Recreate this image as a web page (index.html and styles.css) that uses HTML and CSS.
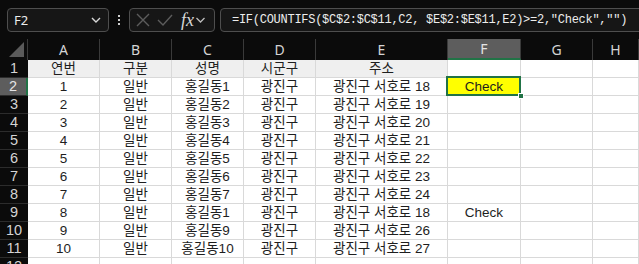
FILE: index.html
```html
<!DOCTYPE html>
<html lang="ko">
  <head>
    <meta charset="UTF-8" />
    <meta name="viewport" content="width=device-width, initial-scale=1.0" />
    <title>countifs check</title>
    <link rel="stylesheet" href="styles.css">
  </head>
  <body>
    <header class="formula-bar">
      <div class="name-box">
        <span>F2</span>
        <svg width="12" height="8" viewBox="0 0 12 8"><path d="M2 2 L6 6 L10 2" fill="none" stroke="#d8d8d8" stroke-width="1.4"/></svg>
      </div>
      <div class="dots"><i></i><i></i><i></i></div>
      <div class="fx-box">
        <svg width="16" height="16" viewBox="0 0 16 16"><path d="M2 2 L14 14 M14 2 L2 14" stroke="#5c5c5c" stroke-width="1.4"/></svg>
        <svg width="18" height="16" viewBox="0 0 18 16"><path d="M2 8 L7 13 L16 3" fill="none" stroke="#5c5c5c" stroke-width="1.4"/></svg>
        <span class="fx">fx</span>
        <svg width="11" height="8" viewBox="0 0 11 8"><path d="M1.5 2 L5.5 6 L9.5 2" fill="none" stroke="#bdbdbd" stroke-width="1.3"/></svg>
      </div>
      <div class="formula">=IF(COUNTIFS($C$2:$C$11,C2, $E$2:$E$11,E2)&gt;=2,"Check","")</div>
    </header>

    <main class="sheet">
      <div class="corner"></div>
      <div class="col-head">A</div>
      <div class="col-head">B</div>
      <div class="col-head">C</div>
      <div class="col-head">D</div>
      <div class="col-head">E</div>
      <div class="col-head active">F</div>
      <div class="col-head">G</div>
      <div class="col-head">H</div>

      <div class="row-head">1</div>
      <div class="cell title">연번</div>
      <div class="cell title">구분</div>
      <div class="cell title">성명</div>
      <div class="cell title">시군구</div>
      <div class="cell title">주소</div>
      <div class="cell"></div><div class="cell"></div><div class="cell"></div>

      <div class="row-head active">2</div>
      <div class="cell">1</div><div class="cell">일반</div><div class="cell">홍길동1</div><div class="cell">광진구</div><div class="cell">광진구 서호로 18</div>
      <div class="cell selected">Check</div><div class="cell"></div><div class="cell"></div>

      <div class="row-head">3</div>
      <div class="cell">2</div><div class="cell">일반</div><div class="cell">홍길동2</div><div class="cell">광진구</div><div class="cell">광진구 서호로 19</div>
      <div class="cell"></div><div class="cell"></div><div class="cell"></div>

      <div class="row-head">4</div>
      <div class="cell">3</div><div class="cell">일반</div><div class="cell">홍길동3</div><div class="cell">광진구</div><div class="cell">광진구 서호로 20</div>
      <div class="cell"></div><div class="cell"></div><div class="cell"></div>

      <div class="row-head">5</div>
      <div class="cell">4</div><div class="cell">일반</div><div class="cell">홍길동4</div><div class="cell">광진구</div><div class="cell">광진구 서호로 21</div>
      <div class="cell"></div><div class="cell"></div><div class="cell"></div>

      <div class="row-head">6</div>
      <div class="cell">5</div><div class="cell">일반</div><div class="cell">홍길동5</div><div class="cell">광진구</div><div class="cell">광진구 서호로 22</div>
      <div class="cell"></div><div class="cell"></div><div class="cell"></div>

      <div class="row-head">7</div>
      <div class="cell">6</div><div class="cell">일반</div><div class="cell">홍길동6</div><div class="cell">광진구</div><div class="cell">광진구 서호로 23</div>
      <div class="cell"></div><div class="cell"></div><div class="cell"></div>

      <div class="row-head">8</div>
      <div class="cell">7</div><div class="cell">일반</div><div class="cell">홍길동7</div><div class="cell">광진구</div><div class="cell">광진구 서호로 24</div>
      <div class="cell"></div><div class="cell"></div><div class="cell"></div>

      <div class="row-head">9</div>
      <div class="cell">8</div><div class="cell">일반</div><div class="cell">홍길동1</div><div class="cell">광진구</div><div class="cell">광진구 서호로 18</div>
      <div class="cell">Check</div><div class="cell"></div><div class="cell"></div>

      <div class="row-head">10</div>
      <div class="cell">9</div><div class="cell">일반</div><div class="cell">홍길동9</div><div class="cell">광진구</div><div class="cell">광진구 서호로 26</div>
      <div class="cell"></div><div class="cell"></div><div class="cell"></div>

      <div class="row-head">11</div>
      <div class="cell">10</div><div class="cell">일반</div><div class="cell">홍길동10</div><div class="cell">광진구</div><div class="cell">광진구 서호로 27</div>
      <div class="cell"></div><div class="cell"></div><div class="cell"></div>

      <div class="row-head">12</div>
      <div class="cell"></div><div class="cell"></div><div class="cell"></div><div class="cell"></div><div class="cell"></div>
      <div class="cell"></div><div class="cell"></div><div class="cell"></div>
    </main>
  </body>
</html>
```

FILE: styles.css
```css
:root {
  --bg-dark: #0b0b0b;
  --grid-line: #d9d9d9;
  --excel-green: #217346;
  --head-text: #d4d4d4;
}

html {
  box-sizing: border-box;
}

*,
*::before,
*::after {
  box-sizing: border-box;
}

body {
  margin: 0;
  width: 639px;
  height: 264px;
  overflow: hidden;
  background-color: var(--bg-dark);
  font-family: "Noto Sans", "Noto Sans CJK KR", sans-serif;
}

/* formula bar */
.formula-bar {
  display: flex;
  align-items: center;
  height: 39px;
  padding: 0 0 0 7px;
  white-space: nowrap;
}

.name-box,
.fx-box,
.formula {
  height: 24px;
  margin-top: 1px;
  border: 1px solid #4e4e4e;
  border-radius: 4px;
  background-color: #161616;
}

.name-box {
  display: flex;
  align-items: center;
  justify-content: space-between;
  width: 102px;
  padding: 0 6px 0 6px;
  color: #ececec;
  font-size: 13px;
  line-height: 16px;
}

.dots {
  display: flex;
  flex-direction: column;
  gap: 2px;
  width: 20px;
  align-items: center;
}

.dots i {
  display: block;
  width: 2px;
  height: 2px;
  background-color: #cfcfcf;
}

.fx-box {
  display: flex;
  align-items: center;
  width: 86px;
  padding: 0 0 0 5px;
  gap: 5px;
}

.fx-box .fx {
  font-family: "Liberation Serif", serif;
  font-style: italic;
  font-size: 18px;
  color: #d8d8d8;
  margin-left: 2px;
  margin-right: -4px;
  line-height: 1;
}

.formula {
  flex: 1;
  margin-left: 5px;
  margin-right: -12px;
  padding: 0 0 0 11px;
  line-height: 22px;
  color: #ededed;
  font-family: "Liberation Mono", monospace;
  font-size: 12px;
  letter-spacing: -0.27px;
}

/* sheet grid */
.sheet {
  display: grid;
  grid-template-columns: 28px 72px 72px 72px 72px 132px 73px 72px 1fr;
  grid-template-rows: 21px repeat(12, 18px);
  background-color: #fff;
}

.corner,
.col-head,
.row-head {
  background-color: var(--bg-dark);
  color: var(--head-text);
}

.corner {
  position: relative;
  border-right: 1px solid #3a3a3a;
}

.corner::after {
  content: "";
  position: absolute;
  right: 3px;
  bottom: 3px;
  width: 15px;
  height: 15px;
  background-color: #5a5a5a;
  clip-path: polygon(100% 0, 100% 100%, 0 100%);
}

.col-head {
  display: flex;
  align-items: center;
  justify-content: center;
  border-right: 1px solid #3a3a3a;
  font-size: 14px;
  line-height: 16px;
  padding-top: 1px;
}

.col-head.active {
  background-color: #5d5d5d;
  border-bottom: 2px solid var(--excel-green);
  color: #e4e4e4;
}

.row-head {
  display: flex;
  align-items: center;
  justify-content: center;
  border-bottom: 1px solid #2c2c2c;
  font-family: "Liberation Sans", sans-serif;
  font-size: 14.5px;
  line-height: 15px;
}

.row-head.active {
  background-color: #5d5d5d;
  border-right: 2px solid var(--excel-green);
  color: #e4e4e4;
}

.cell {
  display: flex;
  align-items: center;
  justify-content: center;
  border-right: 1px solid var(--grid-line);
  border-bottom: 1px solid var(--grid-line);
  font-family: "Liberation Sans", "Noto Sans CJK KR", sans-serif;
  font-size: 13.5px;
  line-height: 15px;
  color: #1e1e1e;
  white-space: nowrap;
}

.cell.title {
  background-color: #efefef;
}

.cell.selected {
  position: relative;
  background-color: #ffff00;
}

.cell.selected::before {
  content: "";
  position: absolute;
  inset: -2px -1px -1px -2px;
  border: 2px solid var(--excel-green);
}

.cell.selected::after {
  content: "";
  position: absolute;
  right: -4px;
  bottom: -4px;
  width: 6px;
  height: 6px;
  background-color: var(--excel-green);
  border: 1px solid #fff;
}
```
